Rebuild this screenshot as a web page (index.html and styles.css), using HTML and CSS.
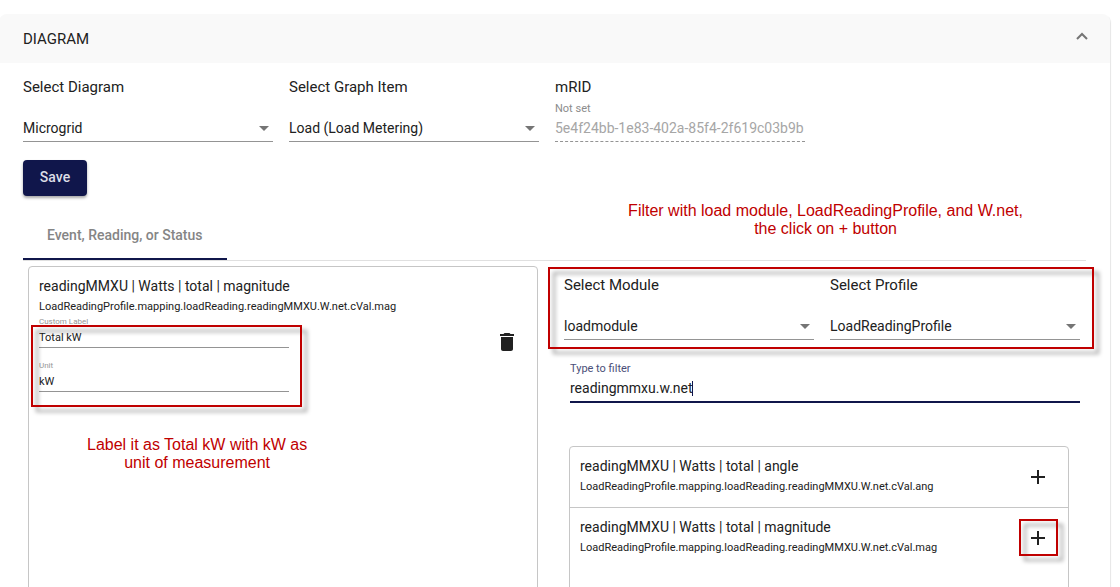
FILE: index.html
```html
<!DOCTYPE html>
<html lang="en">
<head>
<meta charset="utf-8">
<title>Diagram</title>
<link rel="stylesheet" href="styles.css">
</head>
<body>
<main class="app">
  <section class="panel">
    <header class="panel-header">
      <h1 class="panel-title">DIAGRAM</h1>
      <button class="collapse" type="button" aria-label="Collapse">
        <svg width="12" height="8" viewBox="0 0 12 8" aria-hidden="true"><path d="M1 7l5-5 5 5" fill="none" stroke="currentColor" stroke-width="2"/></svg>
      </button>
    </header>
    <div class="panel-body">
      <div class="field-row">
        <div class="field">
          <label class="field-title" for="diagram">Select Diagram</label>
          <div class="hint"></div>
          <div class="select-box"><select id="diagram" class="control"><option>Microgrid</option></select></div>
        </div>
        <div class="field">
          <label class="field-title" for="item">Select Graph Item</label>
          <div class="hint"></div>
          <div class="select-box"><select id="item" class="control"><option>Load (Load Metering)</option></select></div>
        </div>
        <div class="field">
          <label class="field-title" for="mrid">mRID</label>
          <div class="hint">Not set</div>
          <input id="mrid" class="control control-disabled" type="text" value="5e4f24bb-1e83-402a-85f4-2f619c03b9b" disabled>
        </div>
      </div>
      <button class="save" type="button">Save</button>
      <div class="tabs">
        <button class="tab" type="button">Event, Reading, or Status</button>
        <p class="note note-filter">Filter with load module, LoadReadingProfile, and W.net,<br>the click on + button</p>
      </div>
      <div class="workspace">
        <section class="card">
          <div class="reading">
            <div class="reading-text">
              <h2 class="reading-title">readingMMXU | Watts | total | magnitude</h2>
              <p class="reading-path">LoadReadingProfile.mapping.loadReading.readingMMXU.W.net.cVal.mag</p>
              <div class="labels">
                <div class="small-field">
                  <label class="small-label" for="custom">Custom Label</label>
                  <input id="custom" class="small-input" type="text" value="Total kW">
                </div>
                <div class="small-field">
                  <label class="small-label" for="unit">Unit</label>
                  <input id="unit" class="small-input" type="text" value="kW">
                </div>
                <span class="frame frame-labels"></span>
              </div>
            </div>
            <button class="icon-button" type="button" aria-label="Delete">
              <svg width="24" height="24" viewBox="0 0 24 24" aria-hidden="true"><path d="M6 19c0 1.100.9 2 2 2h8c1.100 0 2-.9 2-2V7H6v12zM19 4h-3.500l-1-1h-5l-1 1H5v2h14V4z" fill="currentColor"/></svg>
            </button>
          </div>
          <p class="note note-label">Label it as Total kW with kW as<br>unit of measurement</p>
        </section>
        <section class="picker">
          <div class="field-row picker-selects">
            <div class="field">
              <label class="field-title" for="module">Select Module</label>
              <div class="hint"></div>
              <div class="select-box"><select id="module" class="control"><option>loadmodule</option></select></div>
            </div>
            <div class="field">
              <label class="field-title" for="profile">Select Profile</label>
              <div class="hint"></div>
              <div class="select-box"><select id="profile" class="control"><option>LoadReadingProfile</option></select></div>
            </div>
            <span class="frame frame-selects"></span>
          </div>
          <div class="filter">
            <label class="filter-label" for="filter">Type to filter</label>
            <input id="filter" class="filter-input" type="text" value="readingmmxu.w.net">
            <span class="caret"></span>
          </div>
          <ul class="results">
            <li class="reading">
              <div class="reading-text">
                <h2 class="reading-title">readingMMXU | Watts | total | angle</h2>
                <p class="reading-path">LoadReadingProfile.mapping.loadReading.readingMMXU.W.net.cVal.ang</p>
              </div>
              <button class="icon-button" type="button" aria-label="Add angle">
                <svg width="24" height="24" viewBox="0 0 24 24" aria-hidden="true"><path d="M19 13h-6v6h-2v-6H5v-2h6V5h2v6h6v2z" fill="currentColor"/></svg>
              </button>
            </li>
            <li class="reading">
              <div class="reading-text">
                <h2 class="reading-title">readingMMXU | Watts | total | magnitude</h2>
                <p class="reading-path">LoadReadingProfile.mapping.loadReading.readingMMXU.W.net.cVal.mag</p>
              </div>
              <button class="icon-button" type="button" aria-label="Add magnitude">
                <svg width="24" height="24" viewBox="0 0 24 24" aria-hidden="true"><path d="M19 13h-6v6h-2v-6H5v-2h6V5h2v6h6v2z" fill="currentColor"/></svg>
                <span class="frame frame-add"></span>
              </button>
            </li>
          </ul>
        </section>
      </div>
    </div>
  </section>
</main>
</body>
</html>
```
FILE: styles.css
```css
* { box-sizing: border-box; }
body {
  margin: 0;
  background: #fff;
  color: #212121;
  font-family: Roboto, sans-serif;
  font-size: 14px;
}
h1, h2, p, ul { margin: 0; padding: 0; font-weight: 400; list-style: none; }
button, input, select { margin: 0; padding: 0; border: 0; border-radius: 0; background: none; color: inherit; font: inherit; outline: 0; }

.app { display: flow-root; height: 100vh; overflow: hidden; }
.panel {
  margin: 14px 10px 0 -1px;
  border-radius: 8px;
  box-shadow: 1px 1px 1px rgba(0, 0, 0, 0.1);
}
.panel-header {
  display: flex;
  align-items: center;
  justify-content: space-between;
  height: 49px;
  padding: 0 22px 0 24px;
  border-radius: 8px 8px 0 0;
  background: #f9f9f9;
}
.panel-title { font-size: 15px; }
.collapse { display: flex; padding: 0 0 6px; color: #757575; }
.panel-body { padding: 12px 24px; }

.field-row { display: flex; gap: 16px; }
.field { display: flex; flex-direction: column; width: 250px; }
.field-title { font-size: 15px; line-height: 24px; }
.hint { height: 18px; color: #8c8c8c; font-size: 11px; line-height: 20px; }
.select-box { position: relative; display: flex; }
.select-box::after {
  content: "";
  position: absolute;
  right: 4px;
  top: 9px;
  border: 5px solid transparent;
  border-top-color: #757575;
  border-bottom: 0;
}
.control {
  appearance: none;
  width: 100%;
  height: 25px;
  padding-bottom: 2px;
  border-bottom: 1px solid #949494;
  line-height: 22px;
}
.control-disabled { border-bottom-style: dashed; color: #a6a6a6; }

.save {
  display: block;
  width: 64px;
  height: 36px;
  margin-top: 18px;
  padding-bottom: 2px;
  border-radius: 4px;
  background: #10164b;
  box-shadow: 0 2px 3px rgba(0, 0, 0, 0.35);
  color: #dcdde6;
  font-weight: 500;
}

.tabs { position: relative; margin-top: 15px; border-bottom: 1px solid #e0e0e0; }
.tab {
  height: 49px;
  padding: 0 24px;
  border-bottom: 2px solid #10164b;
  color: #858585;
  font-weight: 500;
  display: block;
}

.workspace {
  display: grid;
  grid-template-columns: 510fr 516fr;
  gap: 26px;
  padding: 5px 6px 0 5px;
}
.card {
  position: relative;
  min-height: 360px;
  border: 1px solid #c6c6c6;
  border-radius: 4px;
}
.reading { display: flex; align-items: center; padding: 9px 10px; }
.reading-text { flex: 1; min-width: 0; }
.reading-title { font-size: 14px; line-height: 20px; }
.reading-path { font-size: 11px; line-height: 22px; }
.icon-button {
  position: relative;
  display: flex;
  align-items: center;
  justify-content: center;
  width: 40px;
  height: 40px;
}
.labels {
  position: relative;
  display: flex;
  flex-direction: column;
  gap: 12px;
  width: 250px;
  margin: -2px 0 16px;
}
.small-field { display: flex; flex-direction: column; }
.small-label { color: #969696; font-size: 8px; line-height: 11px; }
.small-input { height: 21px; border-bottom: 1px solid #949494; font-size: 11px; }

.picker { padding-top: 7px; }
.picker-selects { position: relative; }
.filter { position: relative; display: flex; flex-direction: column; margin: 20px 0 0 6px; }
.filter-label { color: #4b4f78; font-size: 11px; line-height: 18px; }
.filter-input { height: 25px; padding-bottom: 3px; border-bottom: 2px solid #10164b; }
.caret { position: absolute; left: 122px; bottom: 7px; width: 1px; height: 15px; background: #10164b; }
.results {
  min-height: 240px;
  margin: 43px 11px 0 5px;
  border: 1px solid #c6c6c6;
  border-radius: 4px;
}
.results .reading + .reading { border-top: 1px solid #c6c6c6; }

/* Tutorial callouts drawn over the interface */
.frame {
  position: absolute;
  border: 2px solid #c00000;
  filter: drop-shadow(5px 5px 2px rgba(0, 0, 0, 0.4));
  pointer-events: none;
}
.frame-labels { inset: 9px -13px -15px -8px; }
.frame-selects { inset: -6px -14px -9px -16px; }
.frame-add { inset: 1px 0 2px 1px; }
.note {
  position: absolute;
  color: #c00000;
  font-family: "Liberation Sans", Arial, sans-serif;
  font-size: 16px;
  line-height: 18px;
  text-align: center;
  white-space: nowrap;
}
.note-filter { right: 63px; bottom: 22px; }
.note-label { left: 58px; top: 169px; }
```
